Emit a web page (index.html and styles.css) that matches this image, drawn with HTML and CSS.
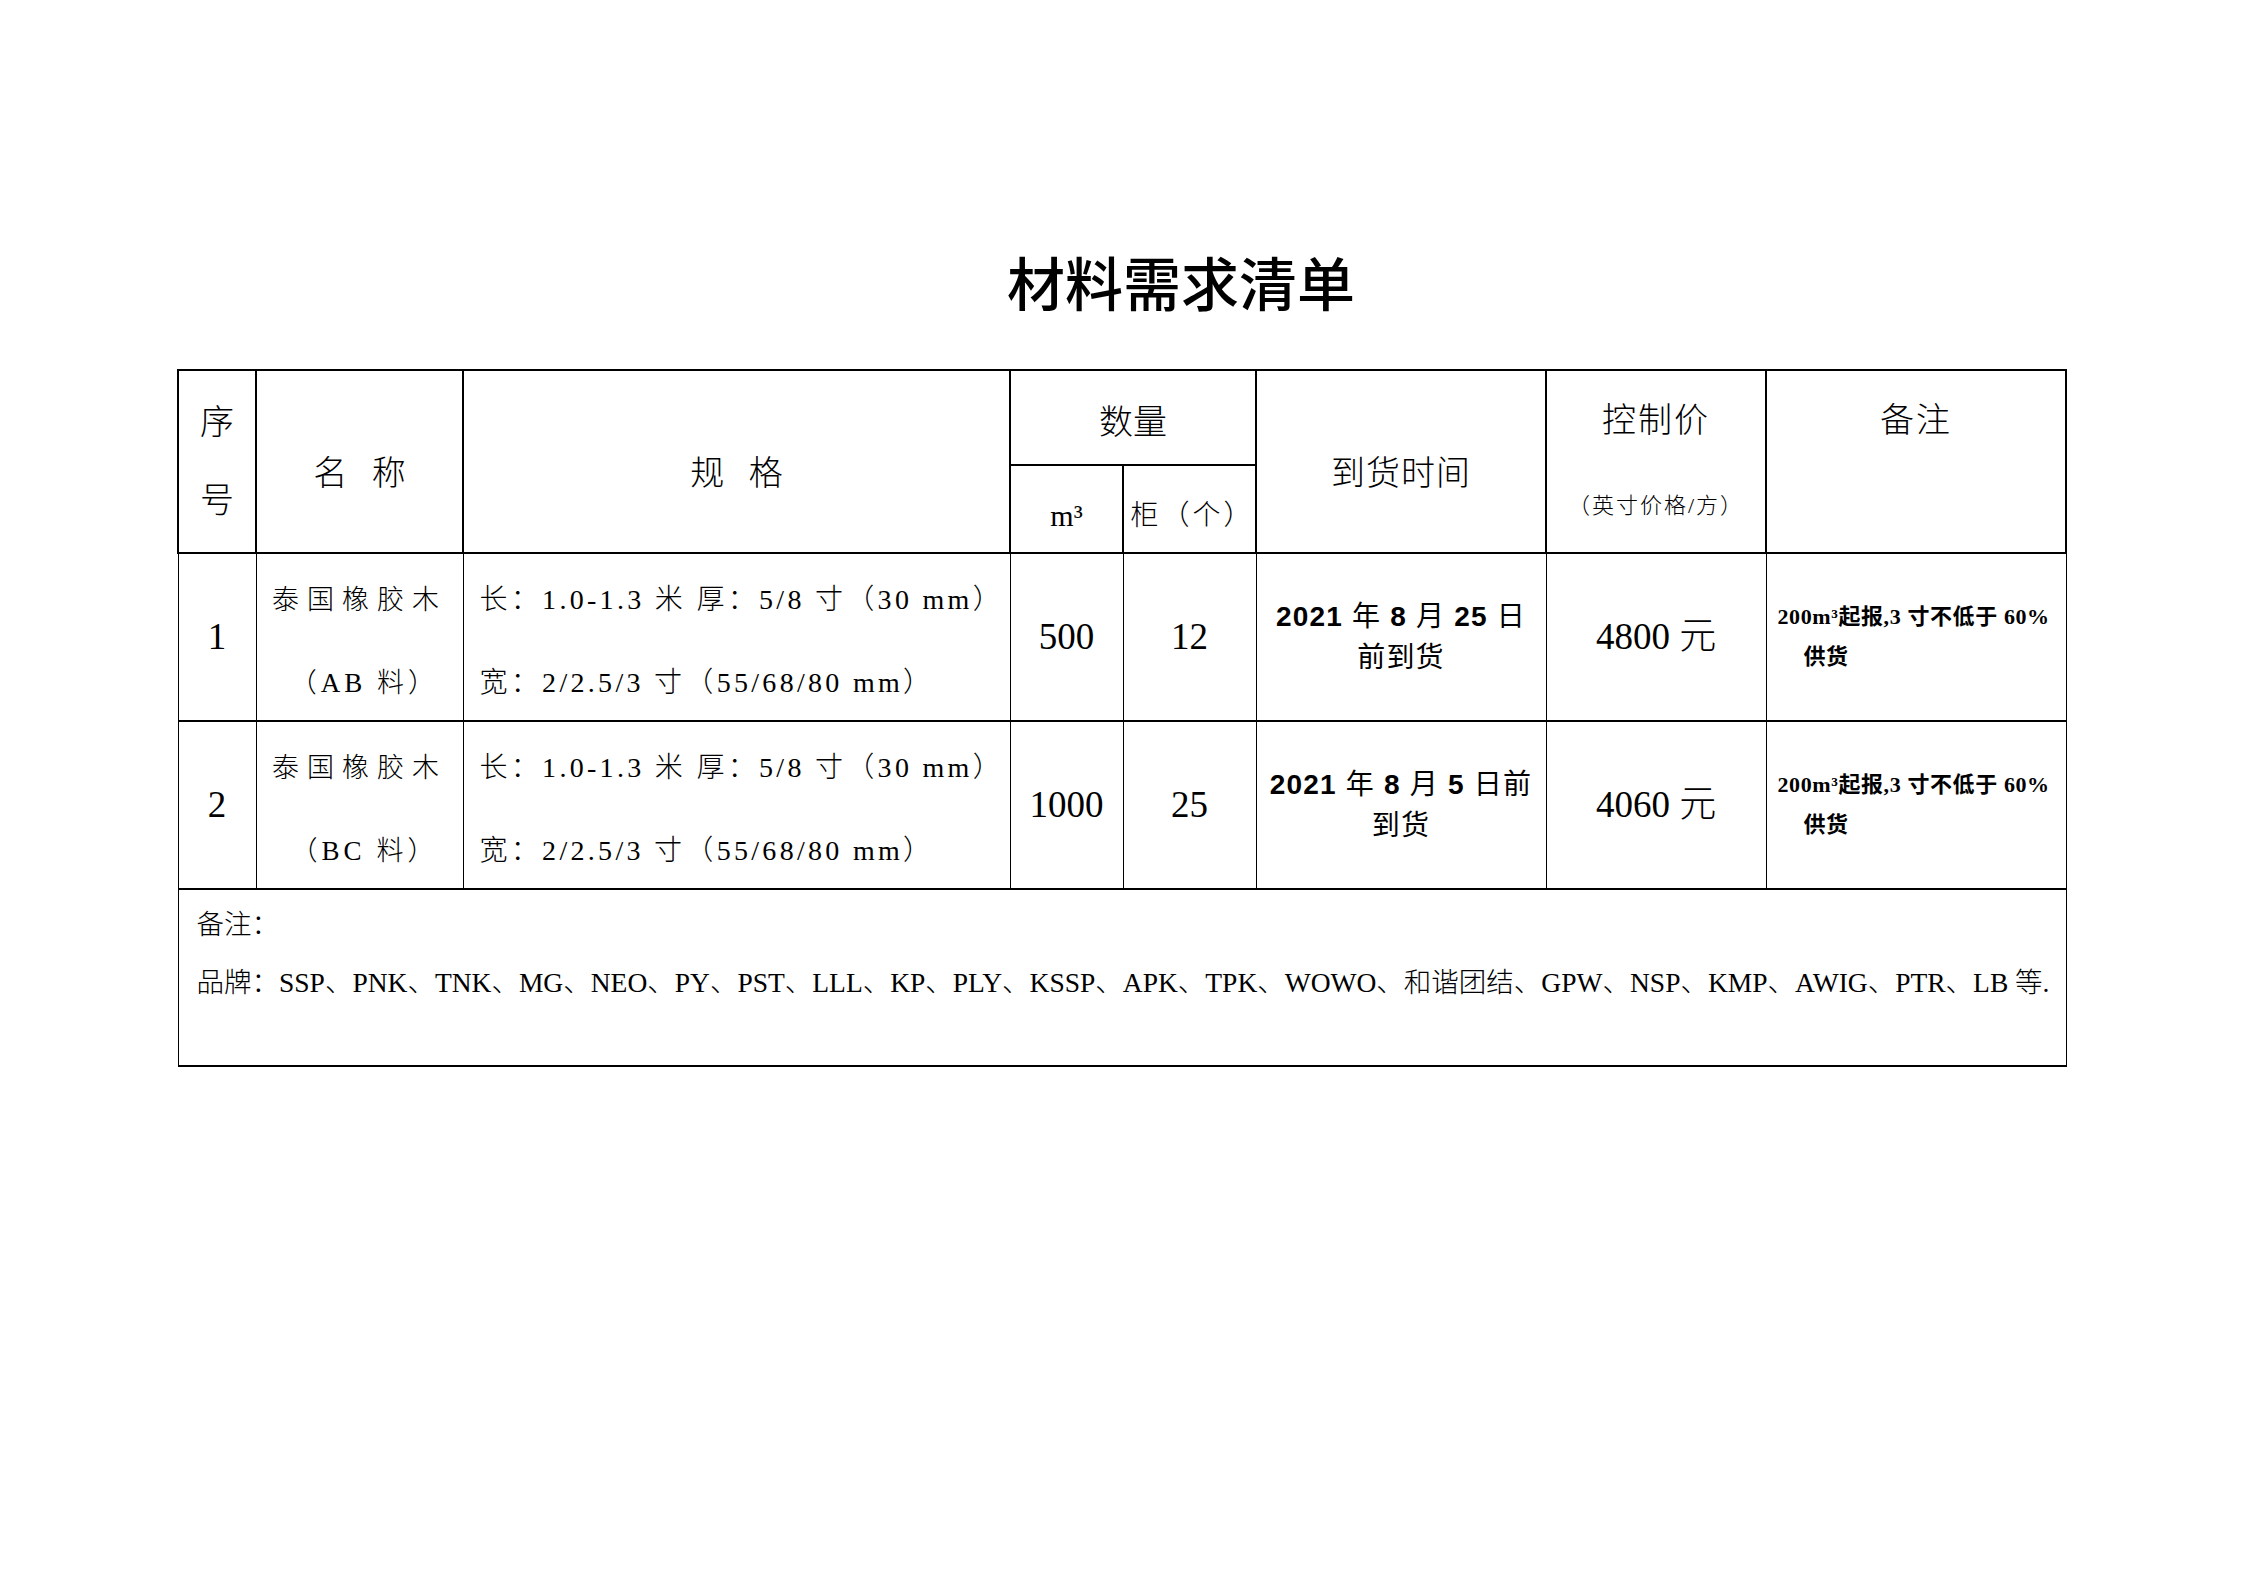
FILE: index.html
```html
<!DOCTYPE html>
<html lang="zh-CN">
<head>
<meta charset="utf-8">
<title>材料需求清单</title>
<link rel="stylesheet" href="styles.css">
</head>
<body>
<div class="page">
  <h1 class="title">材料需求清单</h1>
  <table class="sheet">
    <colgroup>
      <col class="c-no"><col class="c-name"><col class="c-spec"><col class="c-m3"><col class="c-box"><col class="c-date"><col class="c-price"><col class="c-note">
    </colgroup>
    <thead>
      <tr class="hr1">
        <th rowspan="2" class="h-no"><span class="ln">序</span><span class="ln">号</span></th>
        <th rowspan="2" class="h-mid h-sp">名 称</th>
        <th rowspan="2" class="h-mid h-sp">规 格</th>
        <th colspan="2" class="h-qty">数量</th>
        <th rowspan="2" class="h-mid">到货时间</th>
        <th rowspan="2" class="h-top"><span class="ln h-main">控制价</span><span class="ln h-sub">（英寸价格/方）</span></th>
        <th rowspan="2" class="h-top"><span class="ln h-main">备注</span></th>
      </tr>
      <tr class="hr2">
        <th class="h-unit h-m3">m³</th>
        <th class="h-unit h-box">柜（个）</th>
      </tr>
    </thead>
    <tbody>
      <tr class="row">
        <td class="num">1</td>
        <td class="name"><span class="ln">泰国橡胶木</span><span class="ln ln2 tight">（AB 料）</span></td>
        <td class="spec"><span class="ln">长：1.0-1.3 米 厚：5/8 寸（30 mm）</span><span class="ln ln2">宽：2/2.5/3 寸（55/68/80 mm）</span></td>
        <td class="num">500</td>
        <td class="num">12</td>
        <td class="date"><span class="ln"><b>2021</b> 年 <b>8</b> 月 <b>25</b> 日</span><span class="ln">前到货</span></td>
        <td class="num">4800 元</td>
        <td class="note"><span class="ln">200m³起报,3 寸不低于 60%</span><span class="ln indent">供货</span></td>
      </tr>
      <tr class="row">
        <td class="num">2</td>
        <td class="name"><span class="ln">泰国橡胶木</span><span class="ln ln2 tight">（BC 料）</span></td>
        <td class="spec"><span class="ln">长：1.0-1.3 米 厚：5/8 寸（30 mm）</span><span class="ln ln2">宽：2/2.5/3 寸（55/68/80 mm）</span></td>
        <td class="num">1000</td>
        <td class="num">25</td>
        <td class="date"><span class="ln"><b>2021</b> 年 <b>8</b> 月 <b>5</b> 日前</span><span class="ln">到货</span></td>
        <td class="num">4060 元</td>
        <td class="note"><span class="ln">200m³起报,3 寸不低于 60%</span><span class="ln indent">供货</span></td>
      </tr>
      <tr class="remark-row">
        <td colspan="8" class="remark"><span class="ln">备注：</span><span class="ln">品牌：SSP、PNK、TNK、MG、NEO、PY、PST、LLL、KP、PLY、KSSP、APK、TPK、WOWO、和谐团结、GPW、NSP、KMP、AWIG、PTR、LB 等.</span></td>
      </tr>
    </tbody>
  </table>
</div>
</body>
</html>
```
FILE: styles.css
```css
html, body {
  margin: 0;
  padding: 0;
  background: #ffffff;
  color: #000000;
}

.page {
  width: 1888px;
  margin-left: 177px;
  padding-top: 246px;
  font-family: "Liberation Serif", "Noto Sans CJK SC", serif;
  font-weight: 300;
}

.title {
  margin: 0 0 53px 0;
  padding-left: 120px;
  font-family: "Noto Sans CJK SC", sans-serif;
  font-size: 58px;
  font-weight: 500;
  line-height: 70px;
  text-align: center;
}

.sheet {
  width: 1888px;
  table-layout: fixed;
  border-collapse: collapse;
}

.c-no { width: 78px; }
.c-name { width: 207px; }
.c-spec { width: 547px; }
.c-m3 { width: 113px; }
.c-box { width: 133px; }
.c-date { width: 290px; }
.c-price { width: 220px; }
.c-note { width: 300px; }

.ln {
  display: block;
  white-space: nowrap;
}

/* header */
.sheet th {
  border: 2px solid #000;
  padding: 0;
  font-weight: 300;
  text-align: center;
  font-size: 34px;
}

.hr1 { height: 95px; }
.hr2 { height: 88px; }

.h-no {
  vertical-align: middle;
  line-height: 78px;
}

.h-mid {
  vertical-align: middle;
  padding-top: 24px !important;
  line-height: 50px;
  letter-spacing: 1px;
}

.h-sp {
  letter-spacing: 8px;
  text-indent: 8px;
}

.h-qty {
  vertical-align: middle;
  padding-top: 10px !important;
  line-height: 50px;
}

.h-unit {
  vertical-align: middle;
  padding-top: 14px !important;
  font-size: 28px !important;
  line-height: 40px;
}

.h-box {
  letter-spacing: 3px;
  text-indent: 6px;
}

.h-m3 {
  font-size: 30px !important;
}

.h-top {
  vertical-align: top;
  padding-top: 25px !important;
}

.h-main {
  line-height: 50px;
  letter-spacing: 2px;
}

.h-sub {
  margin-top: 45px;
  font-size: 22px;
  line-height: 30px;
  letter-spacing: 2px;
}

/* body */
.sheet td {
  border-top: 2px solid #000;
  border-bottom: 2px solid #000;
  border-left: 1px solid #000;
  border-right: 1px solid #000;
  padding: 0;
  vertical-align: middle;
}

.row { height: 168px; }

.num {
  text-align: center;
  font-size: 37px;
  line-height: 50px;
}

.name {
  text-align: center;
  font-size: 27px;
  line-height: 40px;
  letter-spacing: 8px;
  padding-top: 9px !important;
}

.ln2 {
  margin-top: 43px;
}

.tight {
  letter-spacing: 4px;
  text-indent: 10px;
}

.spec {
  text-align: left;
  padding-left: 16px !important;
  padding-top: 9px !important;
  font-size: 28px;
  line-height: 40px;
  letter-spacing: 3.3px;
}

.date {
  text-align: center;
  font-family: "Liberation Sans", "Noto Sans CJK SC", sans-serif;
  font-size: 28px;
  font-weight: 400;
  line-height: 41px;
  letter-spacing: 1.2px;
}

.date b {
  font-weight: 700;
}

.note {
  text-align: left;
  padding-left: 11px !important;
  font-size: 22px;
  font-weight: 700;
  line-height: 40px;
  letter-spacing: 0.6px;
}

.indent {
  padding-left: 26px;
}

.remark-row { height: 177px; }

.remark {
  vertical-align: top !important;
  padding: 6px 18px 0 18px !important;
  font-size: 27.5px;
  line-height: 58px;
}
```
